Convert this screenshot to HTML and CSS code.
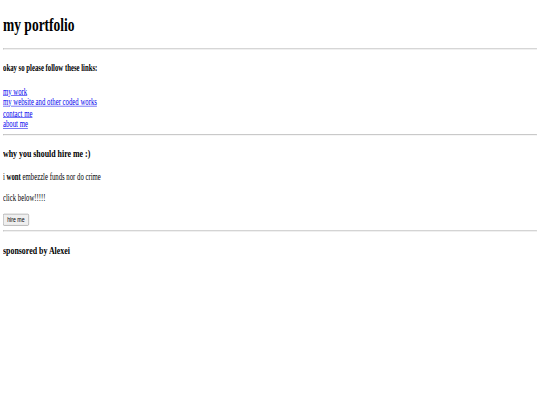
FILE: index.html
```html
<!DOCTYPE html>
<html>
<head>
<meta charset="utf-8">
<title>my portfolio</title>
<link rel="stylesheet" href="styles.css">
</head>
<body>
<div class="viewport">
  <div class="page">
    <h1 class="title">my portfolio</h1>
    <hr class="rule">
    <h4 class="intro">okay so please follow these links:</h4>
    <div class="links">
      <a href="#">my work</a><br>
      <a href="#">my website and other coded works</a><br>
      <a href="#">contact me</a><br>
      <a href="#">about me</a>
    </div>
    <hr class="rule">
    <h3 class="section-title">why you should hire me :)</h3>
    <p class="text">i <b>wont</b> embezzle funds nor do crime</p>
    <p class="text">click below!!!!!</p>
    <button class="hire">hire me</button>
    <hr class="rule">
    <h3 class="section-title">sponsored by Alexei</h3>
  </div>
</div>
</body>
</html>
```
FILE: styles.css
```css
html, body {
  margin: 0;
  padding: 0;
  background: #ffffff;
}
.viewport {
  width: 540px;
  height: 405px;
  overflow: hidden;
}
.page {
  display: flow-root;
  width: 1440px;
  height: 750px;
  box-sizing: border-box;
  padding: 0 8px;
  font-family: "Liberation Serif", "Times New Roman", serif;
  font-size: 18px;
  color: #000;
  transform: scale(0.375, 0.54);
  transform-origin: 0 0;
}
.links {
  line-height: 20.4px;
}
.links a {
  color: #0000ee;
}
.title {
  font-size: 2em;
  margin: 0.67em 0;
}
.intro {
  font-size: 1em;
  margin: 1.33em 0 1.2em;
}
.section-title {
  font-size: 1.17em;
  margin: 1em 0;
}
.text {
  margin: 1em 0;
}
.hire {
  font-family: "Liberation Sans", Arial, sans-serif;
  font-size: 14px;
  line-height: 16px;
  padding: 2px 10px;
  background: #efefef;
  color: #000;
  border: 1px solid #767676;
  border-radius: 3px;
}
.rule {
  margin: 0.5em 0;
}
```
